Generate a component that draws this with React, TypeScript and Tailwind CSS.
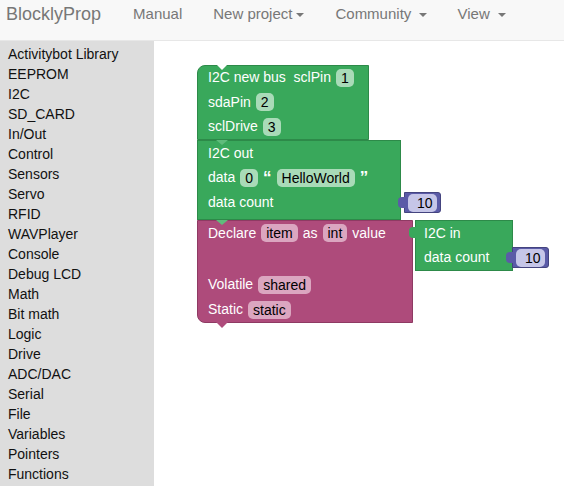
import React from 'react';

const font = { fontFamily: '"Liberation Sans", Arial, sans-serif' };

const categories = [
  'Activitybot Library', 'EEPROM', 'I2C', 'SD_CARD', 'In/Out', 'Control', 'Sensors', 'Servo',
  'RFID', 'WAVPlayer', 'Console', 'Debug LCD', 'Math', 'Bit math', 'Logic', 'Drive',
  'ADC/DAC', 'Serial', 'File', 'Variables', 'Pointers', 'Functions',
];

const Caret = () => (
  <span className="inline-block ml-1 align-middle border-x-4 border-x-transparent border-t-4 border-t-[#777]" />
);

const Field: React.FC<{ children: React.ReactNode; tone: 'green' | 'pink' | 'blue' }> = ({ children, tone }) => {
  const bg = tone === 'green' ? 'bg-[#a9dbb8]' : tone === 'pink' ? 'bg-[#dba6c0]' : 'bg-[#c6c6e8]';
  return (
    <span className={`${bg} text-black rounded-[5px] px-[5px] h-[18px] leading-[18px] inline-block`}>{children}</span>
  );
};

// small reporter block with the puzzle tab on its left
const ValueBlock: React.FC<{ left: number; top: number }> = ({ left, top }) => (
  <div className="absolute" style={{ left, top }}>
    <div className="relative w-[37px] h-[21px] bg-[#5b5ba7] border border-[#44447f] rounded-r-[3px] flex items-center pl-[3px]">
      <Field tone="blue">&nbsp;10</Field>
      <div className="absolute left-[-7px] top-[4px] w-[8px] h-[11px] bg-[#5b5ba7] rounded-l-[4px]" />
    </div>
  </div>
);

export default function App() {
  return (
    <div className="w-[564px] h-[486px] overflow-hidden bg-white flex flex-col" style={font}>
      {/* NAVBAR */}
      <div className="h-[41px] shrink-0 bg-[#f8f8f8] border-b border-[#e7e7e7] flex items-center text-[#777] pb-[12px]">
        <span className="ml-[6px] text-[18px]">BlocklyProp</span>
        <span className="ml-[32px] text-[15px]">Manual</span>
        <span className="ml-[31px] text-[15px]">New project<Caret /></span>
        <span className="ml-[31px] text-[15px]">Community <Caret /></span>
        <span className="ml-[30px] text-[15px]">View <Caret /></span>
      </div>

      <div className="flex flex-1 min-h-0">
        {/* TOOLBOX */}
        <div className="w-[154px] shrink-0 bg-[#dddddd] pt-[3px] pl-[8px] text-[14px] text-[#111]">
          {categories.map((c) => (
            <div key={c} className="h-[20px] leading-[20px]">{c}</div>
          ))}
        </div>

        {/* WORKSPACE */}
        <div className="relative flex-1 text-white text-[14px]">
          {/* I2C new bus */}
          <div className="absolute left-[43px] top-[24px] w-[172px] h-[75px] bg-[#39a85b] border border-[#2d8a49] rounded-tl-[8px] flex flex-col pl-[10px]">
            <div className="h-[24px] flex items-center gap-[5px]">I2C new bus&nbsp; sclPin <Field tone="green">1</Field></div>
            <div className="h-[25px] flex items-center gap-[5px]">sdaPin <Field tone="green">2</Field></div>
            <div className="h-[25px] flex items-center gap-[5px]">sclDrive <Field tone="green">3</Field></div>
            <div className="absolute left-[18px] top-[-2px] w-0 h-0 border-x-[6px] border-x-transparent border-t-[6px] border-t-white" />
          </div>

          {/* I2C out */}
          <div className="absolute left-[43px] top-[99px] w-[204px] h-[80px] bg-[#39a85b] border border-[#2d8a49] flex flex-col pl-[10px]">
            <div className="h-[24px] flex items-center">I2C out</div>
            <div className="h-[25px] flex items-center gap-[5px]">data <Field tone="green">0</Field> <span className="font-bold text-[17px] leading-none">“</span> <Field tone="green">HelloWorld</Field> <span className="font-bold text-[17px] leading-none">”</span></div>
            <div className="h-[25px] flex items-center">data count</div>
            <div className="absolute left-[18px] top-[-1px] w-0 h-0 border-x-[6px] border-x-transparent border-t-[5px] border-t-[#5fbc7b]" />
          </div>
          <ValueBlock left={250} top={151} />

          {/* Declare */}
          <div className="absolute left-[43px] top-[179px] w-[216px] h-[103px] bg-[#ae4b7b] border border-[#8e3a63] rounded-bl-[8px] flex flex-col pl-[10px]">
            <div className="h-[51px] flex items-start">
              <div className="h-[24px] flex items-center gap-[5px]">Declare <Field tone="pink">item</Field> as <Field tone="pink">int</Field> value</div>
            </div>
            <div className="h-[25px] flex items-center gap-[5px]">Volatile <Field tone="pink">shared</Field></div>
            <div className="h-[25px] flex items-center gap-[5px]">Static <Field tone="pink">static</Field></div>
            <div className="absolute left-[18px] top-[-1px] w-0 h-0 border-x-[6px] border-x-transparent border-t-[5px] border-t-[#5fbc7b]" />
            <div className="absolute left-[18px] bottom-[-6px] w-0 h-0 border-x-[6px] border-x-transparent border-t-[6px] border-t-[#ae4b7b]" />
          </div>

          {/* I2C in */}
          <div className="absolute left-[261px] top-[179px] w-[98px] h-[51px] bg-[#39a85b] border border-[#2d8a49] flex flex-col pl-[8px]">
            <div className="h-[24px] flex items-center">I2C in</div>
            <div className="h-[25px] flex items-center">data count</div>
            <div className="absolute left-[-7px] top-[6px] w-[8px] h-[11px] bg-[#39a85b] rounded-l-[4px]" />
          </div>
          <ValueBlock left={358} top={206} />
        </div>
      </div>
    </div>
  );
}
